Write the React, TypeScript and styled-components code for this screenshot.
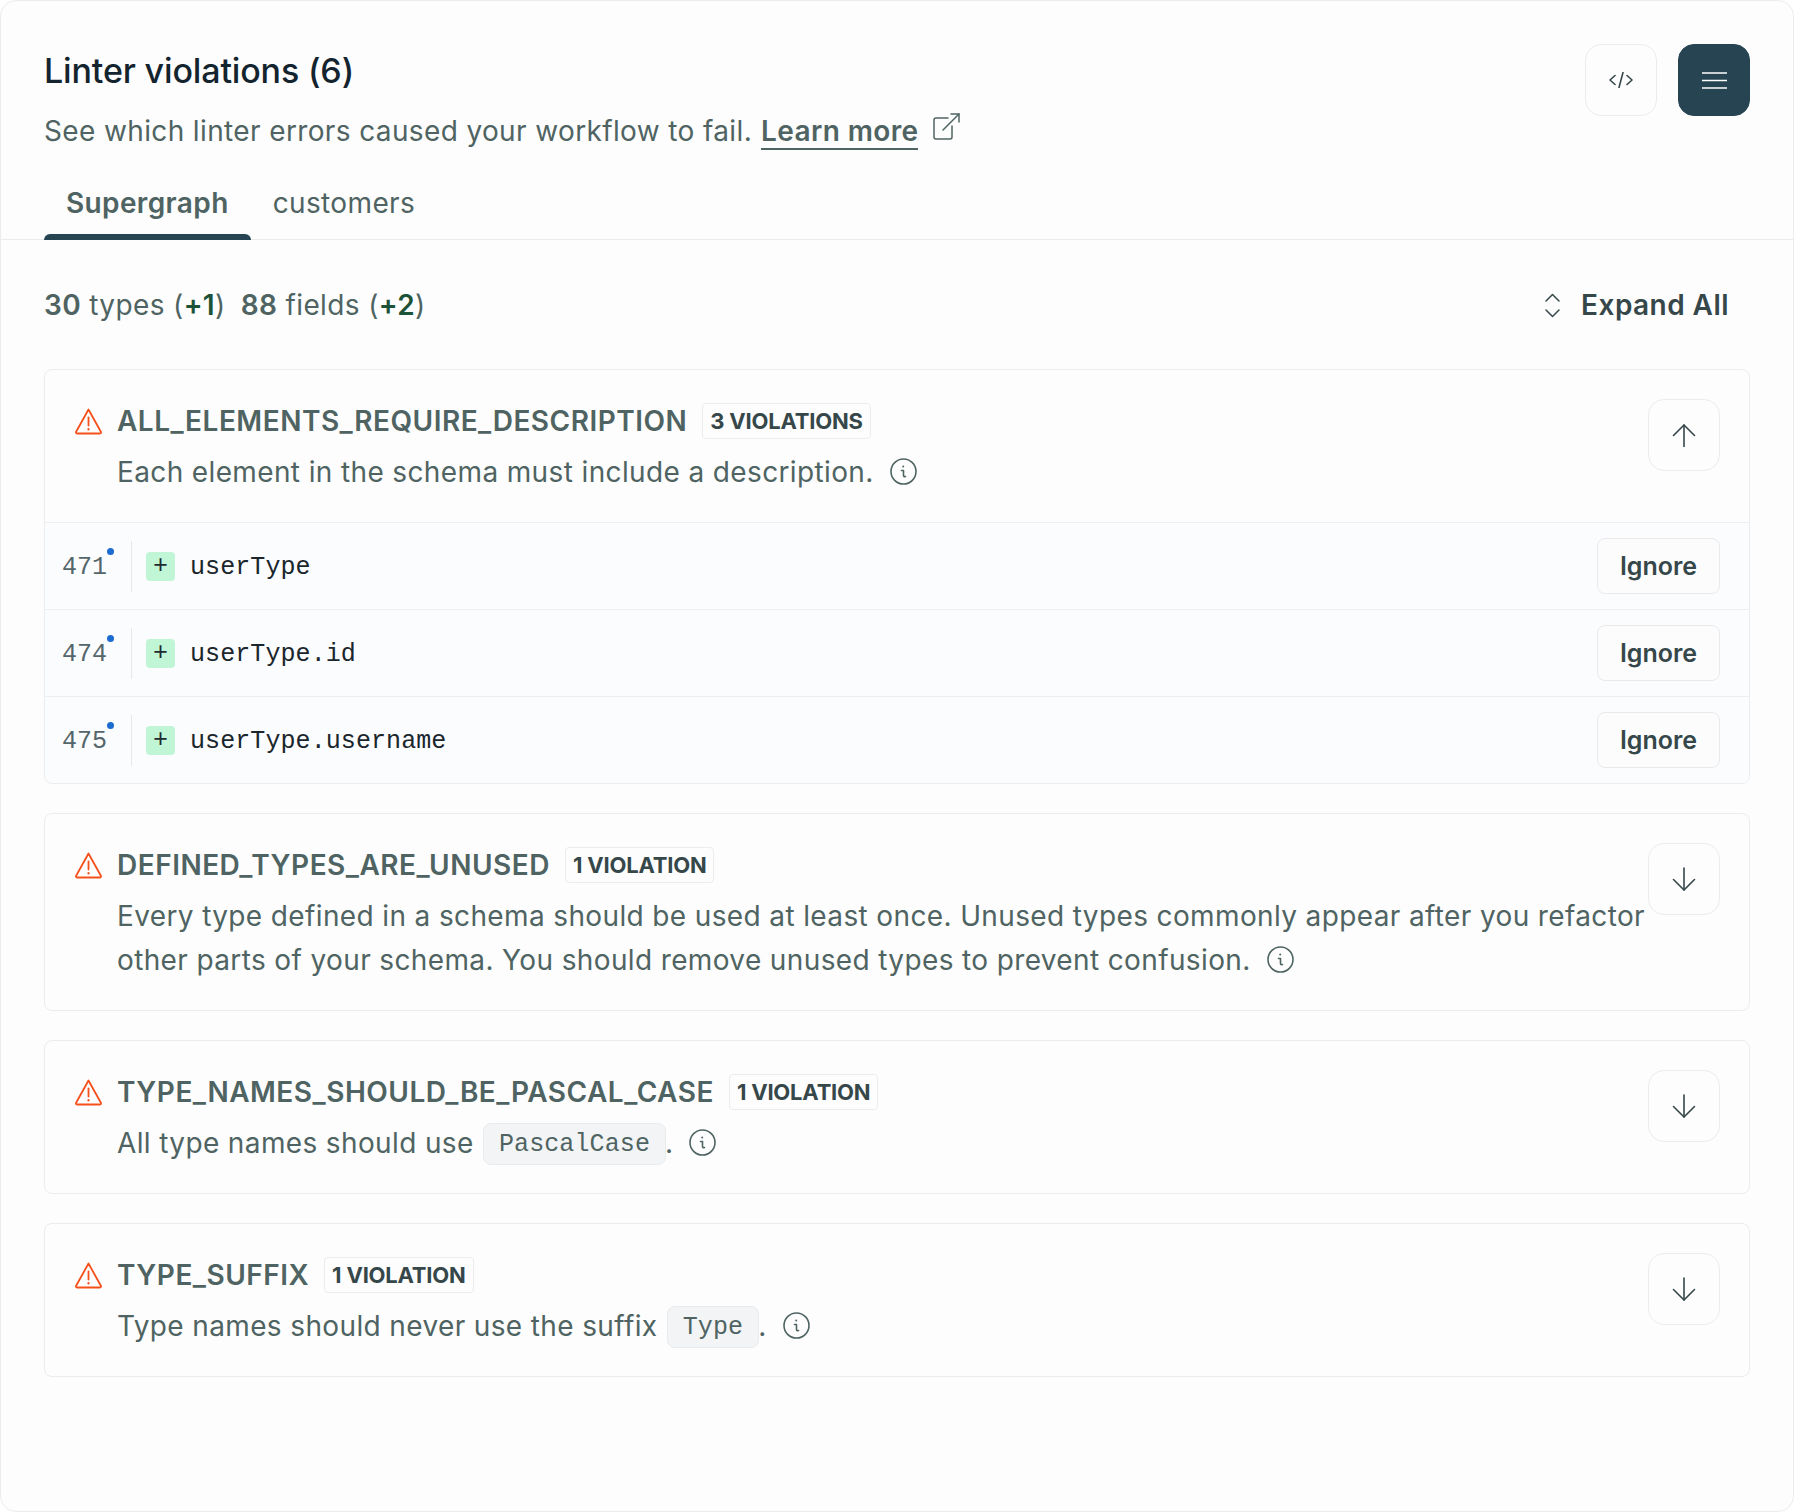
import React from "react";
import styled, { createGlobalStyle } from "styled-components";

const GlobalStyle = createGlobalStyle`
  html, body {
    margin: 0;
    padding: 0;
    background: #fff;
  }
  * {
    box-sizing: border-box;
  }
`;

const MONO = `"Liberation Mono", "DejaVu Sans Mono", monospace`;

const ScPanel = styled.div`
  width: 1794px;
  height: 1512px;
  background: #fdfdfd;
  border: 1px solid #ebeced;
  border-radius: 16px;
  font-family: Inter, "Liberation Sans", sans-serif;
  letter-spacing: 0.37px;
  color: #4f6462;
`;

const ScHeader = styled.div`
  display: flex;
  justify-content: space-between;
  align-items: flex-start;
  padding: 43px 43px 0;
`;

const ScHeading = styled.h2`
  margin: 0 0 11px;
  font-size: 34px;
  line-height: 54px;
  font-weight: 500;
  letter-spacing: -0.15px;
  color: #14242e;
`;

const ScSubtitle = styled.p`
  margin: 0;
  display: flex;
  align-items: flex-start;
  font-size: 28px;
  line-height: 44px;
`;

const ScLearnMore = styled.a`
  margin-left: 9px;
  font-weight: 600;
  color: #4f6462;
  border-bottom: 2px solid #4f6462;
  height: 41px;
`;

const ScExternal = styled.svg`
  margin: 4px 0 0 15px;
  color: #4f6462;
`;

const ScActions = styled.div`
  display: flex;
  gap: 21px;
`;

const ScIconButton = styled.button<{ $dark?: boolean }>`
  display: flex;
  align-items: center;
  justify-content: center;
  flex: none;
  width: 72px;
  height: 72px;
  padding: 0;
  border-radius: 16px;
  border: 1px solid ${(p) => (p.$dark ? "#264452" : "#ebeced")};
  background: ${(p) => (p.$dark ? "#264452" : "#fdfdfd")};
  color: ${(p) => (p.$dark ? "#fff" : "#36474a")};
`;

const ScTabs = styled.div`
  display: flex;
  margin-top: 14px;
  padding-left: 43px;
  border-bottom: 1px solid #e9ebec;
`;

const ScTab = styled.div<{ $active?: boolean }>`
  position: relative;
  height: 72px;
  padding: 14px 22px 0;
  font-size: 28px;
  line-height: 44px;
  font-weight: ${(p) => (p.$active ? 600 : 400)};

  &::after {
    content: "";
    display: ${(p) => (p.$active ? "block" : "none")};
    position: absolute;
    left: 0;
    right: 0;
    bottom: -1px;
    height: 6px;
    background: #264452;
    border-radius: 6px 6px 0 0;
  }
`;

const ScBody = styled.div`
  padding: 43px 43px 0;
`;

const ScStatsRow = styled.div`
  display: flex;
  justify-content: space-between;
  align-items: center;
  height: 44px;
  margin-bottom: 42px;
`;

const ScStats = styled.div`
  display: flex;
  gap: 15px;
  font-size: 28px;
  line-height: 44px;

  b {
    font-weight: 600;
  }

  em {
    font-style: normal;
    font-weight: 600;
    color: #1c5338;
  }
`;

const ScExpandAll = styled.button`
  display: flex;
  align-items: center;
  gap: 21px;
  padding: 0 21px 0 0;
  border: 0;
  background: none;
  font-family: inherit;
  font-size: 28px;
  font-weight: 600;
  letter-spacing: 0.45px;
  color: #36474a;
`;

const ScList = styled.div`
  display: flex;
  flex-direction: column;
  gap: 29px;
`;

const ScCard = styled.div`
  border: 1px solid #ebeced;
  border-radius: 8px;
  overflow: hidden;
`;

const ScCardTop = styled.div`
  display: flex;
  justify-content: space-between;
  align-items: flex-start;
  padding: 29px 29px 28px;
`;

const ScCardInfo = styled.div`
  display: grid;
  grid-template-columns: 27px 1fr;
  column-gap: 15px;
  row-gap: 7px;
  flex: 1;
  padding-left: 1px;
`;

const ScWarn = styled.svg`
  align-self: center;
  color: #f5501b;
`;

const ScRuleLine = styled.div`
  display: flex;
  align-items: center;
  gap: 15px;
  height: 44px;
`;

const ScRuleName = styled.span`
  font-size: 28px;
  font-weight: 600;
  line-height: 44px;
  letter-spacing: 0.5px;
`;

const ScBadge = styled.span`
  display: flex;
  align-items: center;
  height: 36px;
  padding: 0 7px;
  border: 1px solid #ebeced;
  border-radius: 4px;
  font-size: 22px;
  font-weight: 700;
  letter-spacing: -0.2px;
  color: #36474a;
`;

const ScDescription = styled.div`
  grid-column: 2;
  font-size: 28px;
  line-height: 44px;
  white-space: nowrap;
`;

const ScInfo = styled.svg`
  display: inline-block;
  vertical-align: -3px;
  margin-left: 16px;
  color: #4f6462;
`;

const ScCode = styled.code`
  display: inline-block;
  height: 42px;
  padding: 0 15px;
  margin: 0 -1px 0 1px;
  border: 1px solid #e8ebec;
  border-radius: 8px;
  background: #f2f4f5;
  font-family: ${MONO};
  font-size: 25px;
  letter-spacing: 0.1px;
  line-height: 42px;
  vertical-align: 2px;
  color: #4f6462;
`;

const ScRow = styled.div`
  display: flex;
  align-items: center;
  height: 87px;
  padding: 0 29px 0 17px;
  border-top: 1px solid #edeff1;
  background: #fbfcfe;
`;

const ScLineNo = styled.div`
  position: relative;
  flex: none;
  width: 70px;
  height: 51px;
  margin-right: 14px;
  border-right: 1px solid #e6e9eb;
  font-family: ${MONO};
  font-size: 25px;
  letter-spacing: 0;
  line-height: 53px;
  color: #55666a;

  &::after {
    content: "";
    position: absolute;
    left: 45px;
    top: 7px;
    width: 7px;
    height: 7px;
    border-radius: 50%;
    background: #1c6bd0;
  }
`;

const ScPlus = styled.span`
  display: flex;
  align-items: center;
  justify-content: center;
  flex: none;
  width: 29px;
  height: 29px;
  margin-right: 15px;
  border-radius: 4px;
  background: #c0f5d6;
  font-family: ${MONO};
  font-size: 25px;
  letter-spacing: 0;
  color: #1e2b2f;
`;

const ScField = styled.span`
  flex: 1;
  padding-top: 2px;
  font-family: ${MONO};
  font-size: 25px;
  letter-spacing: 0.08px;
  color: #1a262c;
`;

const ScIgnore = styled.button`
  flex: none;
  width: 123px;
  height: 56px;
  padding: 0;
  border: 1px solid #e8eaec;
  border-radius: 8px;
  background: #fcfcfd;
  font-family: inherit;
  font-size: 25px;
  font-weight: 600;
  color: #36474a;
`;

const WarnIcon = () => (
  <ScWarn width="27" height="27" viewBox="0 0 27 27" fill="none" stroke="currentColor" strokeWidth="1.8" strokeLinecap="round" strokeLinejoin="round">
    <path d="M13.5 1.5 L26 24 Q26.3 25.5 25 25.5 H2 Q0.7 25.5 1 24 Z" />
    <path d="M13.5 9.5 V17.5" />
    <path d="M13.5 21 V21.4" strokeWidth="2.2" />
  </ScWarn>
);

const InfoIcon = () => (
  <ScInfo width="27" height="27" viewBox="0 0 27 27" fill="none" stroke="currentColor" strokeWidth="1.6" strokeLinecap="round" strokeLinejoin="round">
    <circle cx="13.5" cy="13.5" r="12.5" />
    <path d="M11.5 12.5 H13.5 V17.5 Q13.5 19 15.5 18.5" />
    <path d="M13.2 8.4 V8.6" strokeWidth="2" />
  </ScInfo>
);

const ArrowUp = () => (
  <svg width="24" height="24" viewBox="0 -1 24 24" fill="none" stroke="currentColor" strokeWidth="1.6" strokeLinecap="round" strokeLinejoin="round">
    <path d="M12 1 V23" />
    <path d="M1.5 11.5 L12 1 L22.5 11.5" />
  </svg>
);

const ArrowDown = () => (
  <svg width="24" height="24" viewBox="0 -1 24 24" fill="none" stroke="currentColor" strokeWidth="1.6" strokeLinecap="round" strokeLinejoin="round">
    <path d="M12 0 V22" />
    <path d="M1.5 11.5 L12 22 L22.5 11.5" />
  </svg>
);

type PtViolation = {
  name: string;
  badge: string;
  expanded?: boolean;
  description: React.ReactNode;
  rows?: { line: number; field: string }[];
};

const violations: PtViolation[] = [
  {
    name: "ALL_ELEMENTS_REQUIRE_DESCRIPTION",
    badge: "3 VIOLATIONS",
    expanded: true,
    description: "Each element in the schema must include a description.",
    rows: [
      { line: 471, field: "userType" },
      { line: 474, field: "userType.id" },
      { line: 475, field: "userType.username" },
    ],
  },
  {
    name: "DEFINED_TYPES_ARE_UNUSED",
    badge: "1 VIOLATION",
    description: (
      <>
        Every type defined in a schema should be used at least once. Unused types commonly appear after you refactor
        <br />
        other parts of your schema. You should remove unused types to prevent confusion.
      </>
    ),
  },
  {
    name: "TYPE_NAMES_SHOULD_BE_PASCAL_CASE",
    badge: "1 VIOLATION",
    description: (
      <>
        All type names should use <ScCode>PascalCase</ScCode>.
      </>
    ),
  },
  {
    name: "TYPE_SUFFIX",
    badge: "1 VIOLATION",
    description: (
      <>
        Type names should never use the suffix <ScCode>Type</ScCode>.
      </>
    ),
  },
];

const ViolationCard = ({ item }: { item: PtViolation }) => (
  <ScCard>
    <ScCardTop>
      <ScCardInfo>
        <WarnIcon />
        <ScRuleLine>
          <ScRuleName>{item.name}</ScRuleName>
          <ScBadge>{item.badge}</ScBadge>
        </ScRuleLine>
        <ScDescription>
          {item.description}
          <InfoIcon />
        </ScDescription>
      </ScCardInfo>
      <ScIconButton>{item.expanded ? <ArrowUp /> : <ArrowDown />}</ScIconButton>
    </ScCardTop>
    {item.rows?.map((row) => (
      <ScRow key={row.line}>
        <ScLineNo>{row.line}</ScLineNo>
        <ScPlus>+</ScPlus>
        <ScField>{row.field}</ScField>
        <ScIgnore>Ignore</ScIgnore>
      </ScRow>
    ))}
  </ScCard>
);

export default function App() {
  return (
    <>
      <GlobalStyle />
      <ScPanel>
        <ScHeader>
          <div>
            <ScHeading>Linter violations (6)</ScHeading>
            <ScSubtitle>
              See which linter errors caused your workflow to fail.
              <ScLearnMore>Learn more</ScLearnMore>
              <ScExternal width="27" height="27" viewBox="0 0 27 27" fill="none" stroke="currentColor" strokeWidth="1.5" strokeLinecap="round" strokeLinejoin="round">
                <path d="M15 5 H3 Q1 5 1 7 V24 Q1 26 3 26 H17 Q19 26 19 24 V13" />
                <path d="M10 17 L26 1" />
                <path d="M18 1 H26 V9" />
              </ScExternal>
            </ScSubtitle>
          </div>
          <ScActions>
            <ScIconButton>
              <svg width="24" height="16" viewBox="0 0 24 16" fill="none" stroke="currentColor" strokeWidth="1.6" strokeLinecap="round" strokeLinejoin="round">
                <path d="M6 3.5 L1 8 L6 12.5" />
                <path d="M18 3.5 L23 8 L18 12.5" />
                <path d="M14 0.5 L10 15.5" />
              </svg>
            </ScIconButton>
            <ScIconButton $dark>
              <svg width="25" height="17" viewBox="0 0 25 17" fill="none" stroke="currentColor" strokeWidth="1.6" strokeLinecap="round">
                <path d="M0.5 1 H24.5" />
                <path d="M0.5 8.5 H24.5" />
                <path d="M0.5 16 H24.5" />
              </svg>
            </ScIconButton>
          </ScActions>
        </ScHeader>
        <ScTabs>
          <ScTab $active>Supergraph</ScTab>
          <ScTab>customers</ScTab>
        </ScTabs>
        <ScBody>
          <ScStatsRow>
            <ScStats>
              <span>
                <b>30</b> types (<em>+1</em>)
              </span>
              <span>
                <b>88</b> fields (<em>+2</em>)
              </span>
            </ScStats>
            <ScExpandAll>
              <svg width="15" height="25" viewBox="0 0 15 25" fill="none" stroke="currentColor" strokeWidth="1.5" strokeLinecap="round" strokeLinejoin="round">
                <path d="M1 8 L7.5 1.5 L14 8" />
                <path d="M1 17 L7.5 23.5 L14 17" />
              </svg>
              Expand All
            </ScExpandAll>
          </ScStatsRow>
          <ScList>
            {violations.map((item) => (
              <ViolationCard key={item.name} item={item} />
            ))}
          </ScList>
        </ScBody>
      </ScPanel>
    </>
  );
}
